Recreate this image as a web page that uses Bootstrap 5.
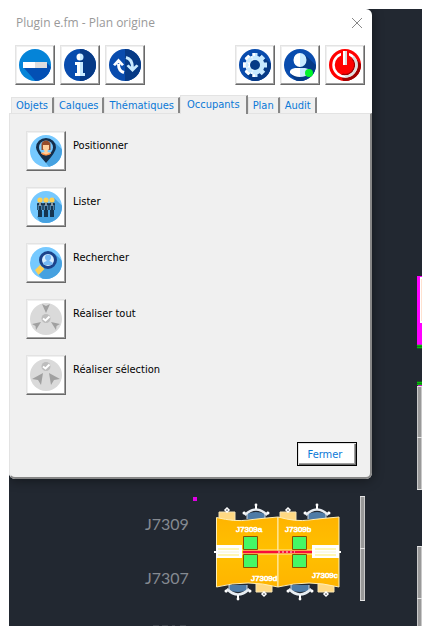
<!DOCTYPE html>
<html lang="fr">
<head>
<meta charset="utf-8">
<meta name="viewport" content="width=device-width, initial-scale=1">
<title>Plugin e.fm - Plan origine</title>
<link href="https://cdn.jsdelivr.net/npm/bootstrap@5.3.0/dist/css/bootstrap.min.css" rel="stylesheet">
<style>
body { padding: 9px 7px 9px 9px; background: #fff; font-family: "DejaVu Sans Condensed", "DejaVu Sans", sans-serif; font-size: 11px; line-height: 16px; }
.workspace { background: #222831; }
.drawing { position: absolute; inset: 0; }
.window { position: relative; margin-right: 50px; background: #fff; border-radius: 0 6px 6px 6px; box-shadow: 0 1px 12px rgba(0,0,0,.45); }
.titlebar { height: 28px; padding: 0 9px 0 7px; color: #999; font: 12px/16px "Open Sans", sans-serif; }
.close-btn { width: 12px; height: 12px; }
.toolbar { padding: 8px 7px 0 6px; }
.tools { gap: 5px; }
.tool { width: 40px; height: 40px; flex: none; background: #fff; border: 1px solid; border-color: #e3e3e3 #696969 #696969 #e3e3e3; box-shadow: inset -1px -1px #a0a0a0, inset 1px 1px #f0f0f0; padding: 0; display: flex; align-items: center; justify-content: center; }
.tool svg { width: 32px; height: 32px; }
.tabs { height: 28px; padding-left: 2px; }
.tab { height: 16px; padding: 0 4px; border: 1px solid #e3e3e3; border-bottom: 0; border-right: 2px solid #868686; background: #f0f0f0; color: #0a78d7; white-space: nowrap; line-height: 15px; }
.tab.current { height: 19px; margin-bottom: -1px; padding: 0 6px 2px; position: relative; }
.panel { padding: 17px 13px 11px 16px; background: #f0f0f0; border: 1px solid #e3e3e3; border-right: 2px solid #868686; border-bottom: 2px solid #868686; border-radius: 0 0 6px 6px; }
.actions { gap: 16px; }
.action { gap: 7px; color: #000; }
.action label { margin-top: 7px; }
.fermer { margin-top: 47px; width: 60px; height: 24px; border: 1px solid #000; background: #fff; color: #0a78d7; box-shadow: inset 1px 1px #e3e3e3, inset -1px -1px #696969, inset -2px -2px #a0a0a0; padding: 2px 4px 0 0; }
</style>
</head>
<body class="min-vh-100 d-flex">
<svg width="0" height="0" class="position-absolute" aria-hidden="true">
  <defs>
    <clipPath id="disc"><circle cx="16" cy="16" r="16"/></clipPath>
    <linearGradient id="amber" x2="0" y2="1"><stop stop-color="#ffb400"/><stop offset=".5" stop-color="#ffc000"/><stop offset="1" stop-color="#ffb400"/></linearGradient>
    <g id="chair">
      <path d="M-10-2 L-12-5 M10-2 L12-5" stroke="#fff" stroke-width="2"/>
      <circle cx="-12" cy="-4" r="1.5" fill="#fff"/><circle cx="12" cy="-4" r="1.5" fill="#fff"/>
      <path d="M-9 2V-3Q0-7 9-3V2Z" fill="#4e7ba6"/>
      <path d="M-11-2Q0-13 11-2" fill="none" stroke="#e8edf2" stroke-width="2.5"/>
      <path d="M-9 2V-3M9 2V-3" stroke="#cdd8e2"/>
      <path d="M0-8V-12" stroke="#fff" stroke-width="2"/><circle cy="-12" r="1.4" fill="#fff"/>
    </g>
    <g id="caisson"><path d="M-8-4H8V5H-8Z" fill="#ffd983" stroke="#f6e3b4"/><path d="M0-8l2 2-2 2-2-2Z" fill="none" stroke="#fff" stroke-width="1.500"/></g>
  </defs>
</svg>
<main class="workspace position-relative flex-grow-1 overflow-hidden">
  <svg class="drawing w-100 h-100" viewBox="9 9 413 617" preserveAspectRatio="xMinYMin slice" role="img" aria-label="Plan">
    <g fill="#858a91" font-family="Lato, sans-serif" font-size="16"><text x="145" y="530">J7309</text><text x="145" y="584">J7307</text></g>
    <path d="M153 625.500h6M162 625.500h6M172 625.500h3M180 625.500h6" stroke="#3d434b"/>
    <rect x="193" y="497" width="4" height="4" fill="#e000e6"/>
    <use href="#caisson" x="227" y="516"/><use href="#caisson" x="288" y="516"/>
    <use href="#caisson" transform="translate(264 588) scale(1 -1)"/><use href="#caisson" transform="translate(326 588) scale(1 -1)"/>
    <use href="#chair" x="256" y="517"/><use href="#chair" x="317" y="517"/>
    <use href="#chair" transform="translate(238 587) scale(1 -1)"/><use href="#chair" transform="translate(300 587) scale(1 -1)"/>
    <g fill="url(#amber)" stroke="#ffeeb4">
      <path d="M216.500 517.500Q235 522 248 520Q265 518 278 517V587Q262 583 248 583Q232 583 216.500 587Z"/>
      <path d="M278 517Q296 522 309 520Q326 518 339 517V587Q322 583 309 583Q294 583 278 587Z"/>
    </g>
    <path d="M242 550H312M242 554H312" stroke="#ffe7a0"/>
    <path d="M216 545h26v13h-26zM312 545h27v13h-27z" fill="#fff"/>
    <path d="M218 549h21M218 555h21M315 549h21M315 555h21" stroke="#fff59a" stroke-width="1.500"/>
    <path d="M218 552h21M315 552h21" stroke="#f4f4d8"/>
    <path d="M214 552h2M339 552h2" stroke="#fff" stroke-width="2"/>
    <g fill="#45f765" stroke="#885100"><path d="M243.500 536.500h14v13h-14zM243.500 554.500h14v13h-14zM292.500 536.500h14v13h-14zM292.500 554.500h14v13h-14z"/></g>
    <path d="M243 552H312" stroke="#f80c3c" stroke-width="2.500"/>
    <path d="M278 552h17" stroke="#ffe6e6" stroke-dasharray="2 2"/>
    <g fill="#fff" stroke="#fff" stroke-width=".6" font-family="'Liberation Sans Narrow', 'Liberation Sans', sans-serif" font-size="8"><text x="236" y="532">J7309a</text><text x="285" y="532">J7309b</text><text x="251" y="581">J7309d</text><text x="312" y="578">J7309c</text></g>
    <g fill="#999"><path d="M360 496h5v104h-5zM417 386h5v104h-5zM417 546h5v90h-5z"/></g>
    <path d="M360.500 496v104M364.500 496v104M417.500 386v104M421.500 386v104M417.500 546v90M421.500 546v90" stroke="#c9c9c9"/>
    <path d="M360 496.500h5M360 548.500h5M360 600.500h5M417 386.500h5M417 437.500h5M417 489.500h5M417 546.500h5M417 598.500h5" stroke="#e4e4e4"/>
    <path d="M417 276h5v69h-5z" fill="#f0f"/><path d="M420 277h2v46h-2z" fill="#fff"/><path d="M421 279h1v42h-1z" fill="#ffe2d0"/>
    <path d="M417 345.500h5M417 347.500h5M417 382.500h5M417 384.500h5" stroke="#00c800" stroke-width="1.500"/><path d="M418 385.500h4" stroke="#c0c"/>
  </svg>

  <section class="window">
    <header class="titlebar d-flex align-items-center justify-content-between">
      <span>Plugin e.fm - Plan origine</span>
      <button type="button" class="close-btn btn p-0 border-0 d-flex" aria-label="Fermer la fenêtre"><svg viewBox="0 0 12 12" width="12" height="12"><path d="M1 1l10 10M11 1L1 11" stroke="#888"/></svg></button>
    </header>
    <div class="toolbar d-flex justify-content-between">
      <div class="tools d-flex">
        <button type="button" class="tool" aria-label="Réduire"><svg viewBox="0 0 32 32"><g clip-path="url(#disc)"><path fill="#0584d8" d="M0 0h32v32H0z"/><path fill="#0350b4" d="M5 19L27 13l9 9v14H20Z"/></g><path fill="#fff" d="M4 13h12v6H4z"/><path fill="#dedede" d="M16 13h12v6H16z"/></svg></button>
        <button type="button" class="tool" aria-label="Informations"><svg viewBox="0 0 32 32"><g clip-path="url(#disc)"><path fill="#094cae" d="M0 0h32v32H0z"/><path fill="#063a86" d="M16 0h16v32H16z"/></g><path fill="#fff" d="M16 4.500a3.500 3.500 0 0 0 0 7zM11 13h5v14h-5v-3h2v-8h-2z"/><path fill="#c8eaff" d="M16 4.500a3.500 3.500 0 0 1 0 7zM16 13h3v11h2v3h-5z"/></svg></button>
        <button type="button" class="tool" aria-label="Actualiser"><svg viewBox="0 0 32 32"><g clip-path="url(#disc)"><path fill="#094cae" d="M0 0h32v32H0z"/><path fill="#063a86" d="M16 0h16v32H16z"/></g><path d="M15 23.500Q9.500 22 9.500 15" fill="none" stroke="#fff" stroke-width="3"/><path fill="#fff" d="M4 15.500l5.500-6 5.500 6-2 1.500-3.500-3-3.500 3z"/><path d="M17 8.500Q23.500 10 23.500 19" fill="none" stroke="#c8eaff" stroke-width="3"/><path fill="#c8eaff" d="M17.500 17l2-1.500 4 3.500 4-3.500 2 1.500-6 6z"/></svg></button>
      </div>
      <div class="tools d-flex">
        <button type="button" class="tool" aria-label="Paramètres"><svg viewBox="0 0 32 32"><g clip-path="url(#disc)"><path fill="#094cae" d="M0 0h32v32H0z"/><path fill="#063a86" d="M21 5L36 18v18H16L7 25z"/></g><g fill="#c8eaff"><circle cx="16" cy="16" r="9.500"/><path d="M13.500 4h5v24h-5zM4 13.500h24v5H4z"/><path d="M13.500 4h5v24h-5zM4 13.500h24v5H4z" transform="rotate(45 16 16)"/></g><path fill="#fff" d="M16 6.500a9.500 9.500 0 0 0 0 19zM13.500 4H16v24h-2.500zM4 13.500h12v5H4zM5.700 9.300l3.600-3.600L16 12v8l-6.700 6.300-3.600-3.600L10 16z"/><circle cx="16" cy="16" r="5" fill="#063a86"/></svg></button>
        <button type="button" class="tool" aria-label="Utilisateur"><svg viewBox="0 0 32 32"><g clip-path="url(#disc)"><path fill="#094cae" d="M0 0h32v32H0z"/><path fill="#063a86" d="M21 6L36 20v16H16L7 26z"/></g><path fill="#fff" d="M16 4a6.500 7 0 0 0 0 14zM16 19h-5q-6 1-5 5 4 4 10 4z"/><path fill="#c8eaff" d="M16 4a6.500 7 0 0 1 0 14zM16 19h5q6 1 5 5-4 4-10 4z"/><circle cx="25" cy="24" r="4" fill="#00f32c"/></svg></button>
        <button type="button" class="tool" aria-label="Quitter"><svg viewBox="0 0 32 32"><g clip-path="url(#disc)"><path fill="red" d="M0 0h32v32H0z"/><path fill="#a00000" d="M25 8l12 12v16H16l-4-9z"/></g><circle cx="16" cy="16" r="11.500" fill="none" stroke="#fff" stroke-width="2.500"/><path d="M24.100 7.900a11.500 11.500 0 0 1-8.100 19.600" fill="none" stroke="#ddd" stroke-width="2.500"/><circle cx="16" cy="16" r="9" fill="red"/><path fill="red" d="M12 2h8v12h-8z"/><path fill="#fff" d="M14 2h2v14h-2z"/><path fill="#ddd" d="M16 2h2v14h-2z"/></svg></button>
      </div>
    </div>
    <div class="tabs d-flex align-items-end" role="tablist">
      <button type="button" role="tab" class="tab">Objets</button><button type="button" role="tab" class="tab">Calques</button><button type="button" role="tab" class="tab">Thématiques</button><button type="button" role="tab" class="tab current" aria-selected="true">Occupants</button><button type="button" role="tab" class="tab">Plan</button><button type="button" role="tab" class="tab">Audit</button>
    </div>
    <div class="panel d-flex flex-column" role="tabpanel">
      <div class="actions d-flex flex-column">
        <div class="action d-flex align-items-start"><button type="button" id="positionner" class="tool"><svg viewBox="0 0 32 32"><g clip-path="url(#disc)"><path fill="#76c9ff" d="M0 0h32v32H0z"/><path fill="#46a1e0" d="M23 6l13 12v18H22l-6-8z"/></g><path fill="#142d4a" d="M16 28Q6 17 6 12.500a10 9.500 0 0 1 20 0Q26 17 16 28z"/><circle cx="16" cy="12.500" r="7" fill="#76c9ff"/><path fill="#964b2b" d="M11.500 15V9q1-3.500 4.500-3.500T20.500 9v6z"/><path fill="#ffcf9e" d="M13 10h6v4l-1.500 2v1q3 0 3.500 1.500Q16 22 11 18.500 11.500 17 14.500 17v-1L13 14z"/><path fill="#ff8a3c" d="M11 17.500l5 2 5-2q-1 3-5 3t-5-3z"/></svg></button><label for="positionner">Positionner</label></div>
        <div class="action d-flex align-items-start"><button type="button" id="lister" class="tool"><svg viewBox="0 0 32 32"><g clip-path="url(#disc)"><path fill="#76c9ff" d="M0 0h32v32H0z"/><path fill="#46a1e0" d="M24 7l13 12v18H14L7 26z"/></g><g id="man"><path fill="#16344f" d="M7 13q0-1.500 3-1.500t3 1.500v6h-1v7H8v-7H7z"/><path fill="#76c9ff" d="M7.800 14h.7v5h-.7zM11.500 14h.7v5h-.7z"/><path fill="#fff" d="M9.500 12h1v3h-1z"/><circle cx="10" cy="9" r="2.600" fill="#ffd052"/></g><use href="#man" x="6"/><use href="#man" x="12"/></svg></button><label for="lister">Lister</label></div>
        <div class="action d-flex align-items-start"><button type="button" id="rechercher" class="tool"><svg viewBox="0 0 32 32"><g clip-path="url(#disc)"><path fill="#76c9ff" d="M0 0h32v32H0z"/><path fill="#46a1e0" d="M25 7l12 11v18H16l-8-9z"/></g><path fill="#ffd052" d="M10 18l4.500 4-6 6L5 23z"/><circle cx="18" cy="13" r="7.500" fill="#d8eeff" stroke="#1c438b" stroke-width="3"/><circle cx="18" cy="10.500" r="3" fill="#76b9f5"/><path fill="#76b9f5" d="M16.500 12h3v2l3 1.500q.5 1.500-.5 2.500h-8q-1-1-.5-2.500l3-1.500z"/></svg></button><label for="rechercher">Rechercher</label></div>
        <div class="action d-flex align-items-start"><button type="button" id="tout" class="tool"><svg viewBox="0 0 32 32"><circle cx="16" cy="16" r="16" fill="#dadada"/><g fill="#a0a0a0"><path d="M12 1l4 2 4-2-4 9zM2 21l9-2-5 8-.5-4zM30 21l-9-2 5 8 .5-4z"/></g><circle cx="16" cy="15.500" r="4.500" fill="#bdbdbd"/><path d="M13 15.500l2.500 2 4-4" fill="none" stroke="#fff" stroke-width="2"/></svg></button><label for="tout">Réaliser tout</label></div>
        <div class="action d-flex align-items-start"><button type="button" id="selection" class="tool"><svg viewBox="0 0 32 32"><circle cx="16" cy="16" r="16" fill="#dadada"/><g fill="#a0a0a0"><path d="M2 20l11-6-2 12-3-5zM30 20l-11-6 2 12 3-5z"/></g><circle cx="16" cy="7.500" r="4.500" fill="#bdbdbd"/><path d="M13 7.500l2.500 2 4-4" fill="none" stroke="#fff" stroke-width="2"/></svg></button><label for="selection">Réaliser sélection</label></div>
      </div>
      <button type="button" class="fermer align-self-end">Fermer</button>
    </div>
  </section>
</main>
<script src="https://cdn.jsdelivr.net/npm/bootstrap@5.3.0/dist/js/bootstrap.bundle.min.js"></script>
</body>
</html>
